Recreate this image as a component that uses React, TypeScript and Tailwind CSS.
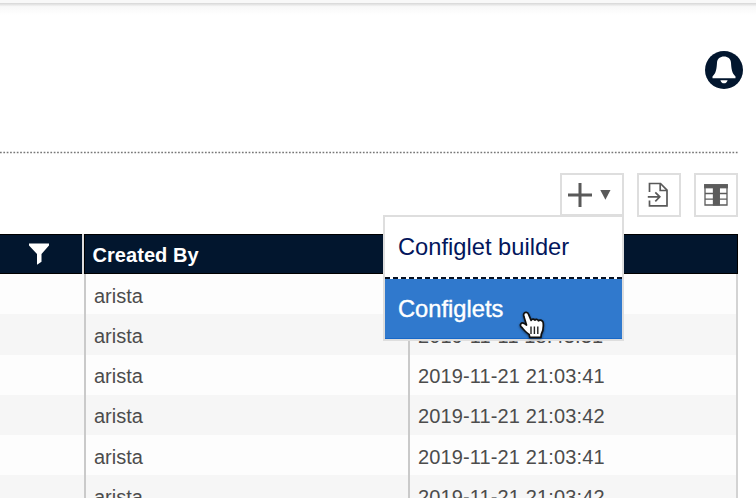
import React from "react";

const rows = [
  { by: "arista", at: "2019-11-11 18:43:31" },
  { by: "arista", at: "2019-11-11 18:43:31" },
  { by: "arista", at: "2019-11-21 21:03:41" },
  { by: "arista", at: "2019-11-21 21:03:42" },
  { by: "arista", at: "2019-11-21 21:03:41" },
  { by: "arista", at: "2019-11-21 21:03:42" },
];

function BellIcon() {
  return (
    <svg width="38" height="38" viewBox="0 0 38 38">
      <circle cx="19" cy="19" r="19" fill="#02162e" />
      <path d="M19 5.600c-3.900 0-6.700 2.200-7 6.200-.4 6.200-.8 10-4.500 13.800v1.600h23v-1.600c-3.700-3.800-4.100-7.600-4.500-13.800-.3-4-3.100-6.200-7-6.200Z" fill="#fff" />
      <path d="M15.400 29.200h7.200c-.5 2-1.800 3.100-3.600 3.100s-3.100-1.100-3.600-3.100Z" fill="#fff" />
    </svg>
  );
}

function ExportIcon() {
  return (
    <svg width="24" height="26" viewBox="0 0 24 26" fill="none" stroke="#595959" strokeWidth="1.700">
      <path d="M2.500 10V1.500h11l6.500 6.700v15.600H2.500V18.500" />
      <path d="M13.200 1.500v7H20M.8 14.800h11.700M8.300 10.300l4.500 4.500-4.500 4.500" />
    </svg>
  );
}

function TableIcon() {
  return (
    <svg width="24" height="22" viewBox="0 0 24 22" fill="none" stroke="#5c5c5c" strokeWidth="1.300">
      <path d="M1 4v17h22V4M1 9.500h22M1 15.200h22" />
      <rect x=".7" y=".7" width="22.600" height="3" fill="#5c5c5c" />
      <rect x="9.500" y="3" width="5.800" height="18" fill="#5c5c5c" />
    </svg>
  );
}

function HandCursor() {
  return (
    <svg className="absolute left-[134px] top-[93px] drop-shadow-[0_1px_1px_rgba(0,0,0,0.5)]" width="28" height="32" viewBox="0 0 28 32">
      <path d="M4.800 3.800c.9-2.200 4-1.700 4.700.3l2.600 6.300c.6-1.500 2.900-1.600 3.700-.2.900-1.300 3.100-.9 3.600.6 1.600-1.300 4.600-.4 4.800 2 .4 4.500 0 8.500-1.900 11.500l-.4 3H10.700l-.5-2.900c-2.800-1.500-5.200-4.600-8-7.500-1.900-2.400.2-5 2.900-3.500l2.400 1.700-2.600-8.500c-.3-1.100-.4-1.900-.1-2.800Z" fill="#fff" stroke="#111" strokeWidth="1.700" strokeLinejoin="round" />
      <path d="M12 16.500v7.500M15.400 16.500v7.500M18.800 16.500v7.500" stroke="#222" strokeWidth="1.400" />
    </svg>
  );
}

function CreateMenu() {
  return (
    <div className="absolute right-[-2px] top-10 z-10 h-[126px] w-[241px] border-2 border-[#dedede] bg-white text-[23.700px] text-[#03165c]">
      <div className="flex h-[60px] items-center pl-[13px] pt-0.5">Configlet builder</div>
      <svg className="block" width="237" height="2">
        <rect width="237" height="2" fill="#fff" />
        <path d="M0 1h237" stroke="#061021" strokeWidth="2" strokeDasharray="5 3" />
      </svg>
      <div className="flex h-[60px] items-center border-b border-[#1768c8] bg-[#3079cd] pl-[13px] pt-[3px] text-white [-webkit-text-stroke:0.4px_#fff]">Configlets</div>
      <HandCursor />
    </div>
  );
}

export default function App() {
  return (
    <div className="h-[498px] w-[756px] overflow-hidden bg-white font-['Liberation_Sans',Arial,sans-serif]">
      <div className="h-[3px] bg-[#f8f8f8]" />
      <div className="h-3 bg-linear-to-b from-[#d6d6d6] via-[#f8f8f8] via-30% to-white" />
      <header className="flex h-[136px] justify-end pr-[13px] pt-9">
        <BellIcon />
      </header>
      <svg className="block" width="738" height="3">
        <path d="M0 1.500h738" stroke="#777" strokeWidth="1.500" strokeDasharray="1.700 1.660" />
      </svg>
      <div className="flex h-20 items-start justify-end gap-[13px] pr-[18px] pt-[19px]">
        <div className="relative flex h-[43px] w-16 items-center border-2 border-[#dedede] pl-1.5">
          <svg width="48" height="26" viewBox="0 0 48 26">
            <path d="M0 13h24M12 1v24" stroke="#595959" strokeWidth="3" />
            <path d="M32.300 8h10.200l-5.100 9.800Z" fill="#595959" />
          </svg>
          <CreateMenu />
        </div>
        <div className="flex h-[44px] w-[44px] items-center justify-center border-2 border-[#dedede]"><ExportIcon /></div>
        <div className="flex h-[44px] w-[44px] items-center justify-center border-2 border-[#dedede]"><TableIcon /></div>
      </div>
      <div className="w-[738px] text-[20px]">
        <div className="flex h-10 bg-[#02162e] text-white">
          <div className="flex w-[82px] items-center border-y border-black pl-[29px]">
            <svg width="20" height="22" viewBox="0 0 20 22"><path d="M0 .5h20v2L12.500 11v7.700L8 21.800V11L0 2.500Z" fill="#fff" /></svg>
          </div>
          <div className="w-0.5 bg-[#ddd]" />
          <div className="flex w-[324px] items-center border border-black pl-[7.500px] pt-0.5 font-bold tracking-[0.05px]">Created By</div>
          <div className="w-0.5 bg-[#ddd]" />
          <div className="flex-1 border border-black" />
        </div>
        <div>
          {rows.map((row, i) => (
            <div key={i} className="flex h-[40.250px] border-r-2 border-[#d3d3d3] bg-[#fdfdfd] text-[#4c4c4c] even:bg-[#f6f6f6]">
              <div className="w-[86px] border-r-2 border-[#cacaca]" />
              <div className="flex w-[324px] items-center border-r-2 border-[#cacaca] pl-2 pt-[3px]">{row.by}</div>
              <div className="flex items-center pl-2 pt-[3px] tracking-[0.130px]">{row.at}</div>
            </div>
          ))}
        </div>
      </div>
    </div>
  );
}
